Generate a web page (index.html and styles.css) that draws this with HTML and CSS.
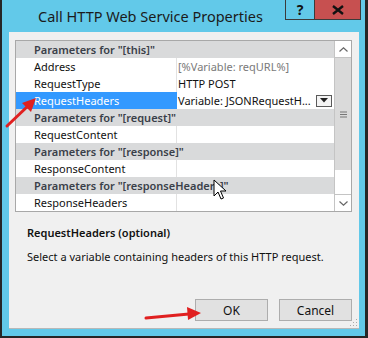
FILE: index.html
```html
<!DOCTYPE html>
<html lang="en">
<head>
    <meta charset="UTF-8">
    <title>Call HTTP Web Service Properties</title>
    <link rel="stylesheet" href="styles.css">
</head>
<body>
    <div class="window">
        <div class="titlebar">
            <div class="title">Call HTTP Web Service Properties</div>
            <div class="caption-btn help">?</div>
            <div class="caption-btn close">
                <svg width="12" height="10" viewBox="0 0 12 10"><path d="M1 1 L11 9 M11 1 L1 9" stroke="#111" stroke-width="2.4"/></svg>
            </div>
        </div>

        <div class="content">
            <div class="grid">
                <div class="rows">
                    <div class="row category">Parameters for "[this]"</div>
                    <div class="row prop">
                        <span class="name">Address</span>
                        <span class="value muted">[%Variable: reqURL%]</span>
                    </div>
                    <div class="row prop">
                        <span class="name">RequestType</span>
                        <span class="value">HTTP POST</span>
                    </div>
                    <div class="row prop selected">
                        <span class="name">RequestHeaders</span>
                        <span class="value">Variable: JSONRequestH...
                            <span class="drop">
                                <svg width="8" height="5" viewBox="0 0 8 5"><path d="M0 0 H8 L4 4.5 Z" fill="#222"/></svg>
                            </span>
                        </span>
                    </div>
                    <div class="row category">Parameters for "[request]"</div>
                    <div class="row prop">
                        <span class="name">RequestContent</span>
                        <span class="value"></span>
                    </div>
                    <div class="row category">Parameters for "[response]"</div>
                    <div class="row prop">
                        <span class="name">ResponseContent</span>
                        <span class="value"></span>
                    </div>
                    <div class="row category">Parameters for "[responseHeaders]"</div>
                    <div class="row prop">
                        <span class="name">ResponseHeaders</span>
                        <span class="value"></span>
                    </div>
                </div>
                <div class="scrollbar">
                    <div class="sb-btn">
                        <svg width="9" height="5" viewBox="0 0 9 5"><path d="M0.5 4.5 L4.5 0.8 L8.5 4.5" fill="none" stroke="#666" stroke-width="1.2"/></svg>
                    </div>
                    <div class="sb-thumb">
                        <svg width="7" height="7" viewBox="0 0 7 7"><path d="M0 1 H7 M0 3.5 H7 M0 6 H7" stroke="#777" stroke-width="1"/></svg>
                    </div>
                    <div class="sb-track"></div>
                    <div class="sb-btn down">
                        <svg width="9" height="5" viewBox="0 0 9 5"><path d="M0.5 0.5 L4.5 4.2 L8.5 0.5" fill="none" stroke="#666" stroke-width="1.2"/></svg>
                    </div>
                </div>
            </div>

            <div class="help-area">
                <div class="help-title">RequestHeaders (optional)</div>
                <div class="help-text">Select a variable containing headers of this HTTP request.</div>
            </div>

            <div class="buttons">
                <button class="btn">OK</button>
                <button class="btn">Cancel</button>
            </div>

            <svg class="grip" width="8" height="8" viewBox="0 0 8 8">
                <rect x="6" y="0" width="1" height="1" fill="#aaa"/>
                <rect x="3" y="3" width="1" height="1" fill="#aaa"/>
                <rect x="6" y="3" width="1" height="1" fill="#aaa"/>
                <rect x="0" y="6" width="1" height="1" fill="#aaa"/>
                <rect x="3" y="6" width="1" height="1" fill="#aaa"/>
                <rect x="6" y="6" width="1" height="1" fill="#aaa"/>
            </svg>
        </div>

        <!-- annotation arrows and mouse pointer drawn over the dialog -->
        <svg class="arrow arrow-headers" width="40" height="40" viewBox="0 0 40 40">
            <line x1="4" y1="35" x2="26" y2="14" stroke="#e02020" stroke-width="3" stroke-linecap="round"/>
            <path d="M33 7 L19 12 L28 21 Z" fill="#e02020"/>
        </svg>
        <svg class="arrow arrow-ok" width="64" height="20" viewBox="0 0 64 20">
            <line x1="3" y1="14" x2="46" y2="10" stroke="#e02020" stroke-width="3" stroke-linecap="round"/>
            <path d="M58 9 L44 3 L45 16 Z" fill="#e02020"/>
        </svg>
        <svg class="cursor" width="14" height="22" viewBox="0 0 14 22">
            <path d="M1 1 L1 17 L5 13 L8 20 L10.5 19 L7.5 12 L13 12 Z" fill="#fff" stroke="#000" stroke-width="1"/>
        </svg>
    </div>
</body>
</html>
```

FILE: styles.css
```css
body {
    margin: 0;
    font-family: "Noto Sans", "Open Sans", sans-serif;
    font-size: 11px;
    color: #111;
}

.window {
    position: relative;
    width: 368px;
    height: 338px;
    box-sizing: border-box;
    background: #62c9e9;
    border: 2px solid #262626;
    border-top: none;
    border-right-width: 3px;
    display: flex;
    flex-direction: column;
}

.titlebar {
    height: 32px;
    display: flex;
    align-items: flex-start;
    flex-shrink: 0;
}

.title {
    flex: 1;
    min-width: 0;
    white-space: nowrap;
    padding: 6px 0 0 36px;
    font-size: 14.5px;
    color: #1b1b1b;
}

.caption-btn {
    height: 19px;
    border: 1px solid #3b3b3b;
    border-top: none;
    display: flex;
    align-items: center;
    justify-content: center;
    font-weight: bold;
    font-size: 14px;
}

.help {
    width: 28px;
    border-right: none;
}

.close {
    width: 45px;
    background: #c75050;
    margin-right: 4px;
}

.content {
    position: relative;
    flex: 1;
    margin: 0 6px 7px 7px;
    background: #f0f0f0;
    border-bottom: 1px solid #b8b8b8;
    display: flex;
    flex-direction: column;
    padding: 8px 7px 7px 6px;
}

.grid {
    display: flex;
    height: 170px;
    border: 1px solid #a8a8a8;
    background: #fff;
}

.rows {
    flex: 1;
}

.row {
    height: 17px;
    line-height: 17px;
    white-space: nowrap;
    overflow: hidden;
}

.category {
    background: #d9dadb;
    padding-left: 18px;
    font-weight: 600;
    color: #3a4049;
}

.prop {
    display: flex;
    background: #fff;
}

.name {
    width: 161px;
    padding-left: 18px;
    box-sizing: border-box;
    border-right: 1px solid #e2e2e2;
}

.value {
    flex: 1;
    padding-left: 1px;
    display: flex;
    align-items: center;
}

.muted {
    color: #7a7a7a;
}

.selected .name {
    background: #3399ff;
    color: #fff;
    border-right-color: #3399ff;
}

.drop {
    margin-left: auto;
    margin-right: 2px;
    width: 14px;
    height: 10px;
    border: 1px solid #5a5a5a;
    background: #f4f4f4;
    display: flex;
    align-items: center;
    justify-content: center;
}

.scrollbar {
    width: 16px;
    border-left: 1px solid #c4c4c4;
    display: flex;
    flex-direction: column;
}

.sb-btn {
    height: 16px;
    border-bottom: 1px solid #c4c4c4;
    display: flex;
    align-items: center;
    justify-content: center;
}

.sb-btn.down {
    border-bottom: none;
    border-top: 1px solid #c4c4c4;
}

.sb-thumb {
    height: 112px;
    background: #dadada;
    display: flex;
    align-items: center;
    justify-content: center;
}

.sb-track {
    flex: 1;
    background: #fff;
}

.help-area {
    padding: 12px 0 0 12px;
}

.help-title {
    font-weight: 600;
    line-height: 17px;
}

.help-text {
    margin-top: 7px;
    line-height: 17px;
}

.buttons {
    margin-top: auto;
    display: flex;
    justify-content: flex-end;
    gap: 11px;
}

.btn {
    width: 73px;
    height: 22px;
    border: 1px solid #adadad;
    background: #e1e1e1;
    font-family: inherit;
    font-size: 12px;
    color: #111;
    padding: 0;
}

.grip {
    position: absolute;
    right: 1px;
    bottom: 1px;
}

.arrow,
.cursor {
    position: absolute;
}

.arrow-headers {
    left: 1px;
    top: 91px;
}

.arrow-ok {
    left: 141px;
    top: 304px;
}

.cursor {
    left: 211px;
    top: 179px;
}
```
